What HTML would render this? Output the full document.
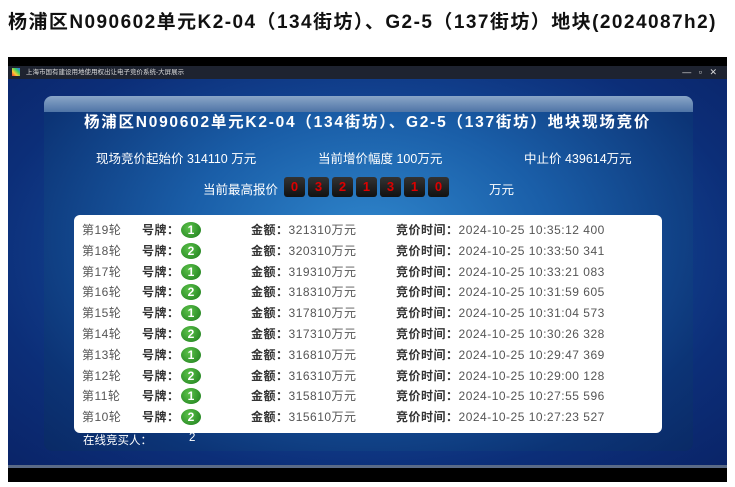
<!DOCTYPE html>
<html><head><meta charset="utf-8"><style>
*{margin:0;padding:0;box-sizing:border-box}
body{width:735px;height:487px;background:#fff;position:relative;overflow:hidden;font-family:"Liberation Sans","Noto Sans CJK SC",sans-serif}
.h{position:absolute;left:8px;top:7px;font-size:19px;font-weight:bold;color:#111;white-space:nowrap;letter-spacing:1.45px}
.blk{position:absolute;left:8px;top:57px;width:719px;height:425px;background:#000}
.tb{position:absolute;left:8px;top:66px;width:719px;height:13px;background:#1e2330;color:#ddd;font-size:6.5px;line-height:13px}
.scr{position:absolute;left:8px;top:79px;width:719px;height:386px;background:radial-gradient(ellipse at 50% 45%,#2a78c0 0%,#1650a0 35%,#0c2e78 75%,#0a2468 100%)}
.line{position:absolute;left:8px;top:465px;width:719px;height:3px;background:#5a6a86}
.pan{position:absolute;left:44px;top:96px;width:649px;height:355px;border-radius:8px;background:radial-gradient(ellipse at 50% 40%,#2f86cc 0%,#1a5ea8 40%,#0c3476 80%,#0a2a66 100%)}
.gl{position:absolute;left:44px;top:96px;width:649px;height:16px;border-radius:8px 8px 0 0;background:linear-gradient(#8aa6c8,#4f74a6)}
.t{position:absolute;color:#fff;white-space:nowrap}
.tab{position:absolute;left:74px;top:215px;width:588px;height:218px;background:#fff;border-radius:6px}
.r{position:absolute;font-size:12px;color:#555;white-space:nowrap;left:0;height:20px;line-height:20px;letter-spacing:0.5px}
.r span{position:absolute}
.r b{color:#333}
.b{display:inline-block;width:20px;height:16px;border-radius:50%;background:radial-gradient(circle at 40% 35%,#5cc24a,#1a7a1a);color:#fff;font-weight:bold;font-size:12px;text-align:center;line-height:16px;top:2px;letter-spacing:0}
.d{display:inline-block;width:21px;height:20px;margin-right:3px;background:linear-gradient(#333,#111);border-radius:3px;color:#d00;font-weight:bold;font-size:13px;text-align:center;line-height:20px}
</style></head><body>
<div class="h">杨浦区N090602单元K2-04（134街坊）、G2-5（137街坊）地块(2024087h2)</div>
<div class="blk"></div>
<div class="tb"><span style="display:inline-block;width:8px;height:8px;background:linear-gradient(45deg,#e33,#fc3,#3c6,#36f);margin:2px 6px 0 4px;vertical-align:top"></span>上海市国有建设用地使用权出让电子竞价系统-大屏展示<span style="position:absolute;right:10px;font-size:9px">—&nbsp;&nbsp;&nbsp;▫&nbsp;&nbsp;&nbsp;✕</span></div>
<div class="scr"></div>
<div class="line"></div>
<div class="pan"></div>
<div class="gl"></div>
<div class="t" style="left:84px;top:110px;font-size:15.5px;font-weight:bold;letter-spacing:1.75px">杨浦区N090602单元K2-04（134街坊）、G2-5（137街坊）地块现场竞价</div>
<div class="t" style="left:96px;top:148px;font-size:12.5px">现场竞价起始价 314110 万元</div>
<div class="t" style="left:318px;top:148px;font-size:12.5px">当前增价幅度 100万元</div>
<div class="t" style="left:524px;top:148px;font-size:12.5px">中止价 439614万元</div>
<div class="t" style="left:203px;top:179px;font-size:12.5px">当前最高报价</div>
<div class="t" style="left:284px;top:177px"><span class="d">0</span><span class="d">3</span><span class="d">2</span><span class="d">1</span><span class="d">3</span><span class="d">1</span><span class="d">0</span></div>
<div class="t" style="left:489px;top:179px;font-size:12.5px">万元</div>
<div class="tab">
<div class="r" style="top:5px"><span style="left:8px">第19轮</span><span style="left:68px"><b>号牌：</b></span><span class="b" style="left:107px">1</span><span style="left:177px"><b>金额：</b>321310万元</span><span style="left:322px"><b>竞价时间：</b>2024-10-25 10:35:12 400</span></div>
<div class="r" style="top:25.8px"><span style="left:8px">第18轮</span><span style="left:68px"><b>号牌：</b></span><span class="b" style="left:107px">2</span><span style="left:177px"><b>金额：</b>320310万元</span><span style="left:322px"><b>竞价时间：</b>2024-10-25 10:33:50 341</span></div>
<div class="r" style="top:46.6px"><span style="left:8px">第17轮</span><span style="left:68px"><b>号牌：</b></span><span class="b" style="left:107px">1</span><span style="left:177px"><b>金额：</b>319310万元</span><span style="left:322px"><b>竞价时间：</b>2024-10-25 10:33:21 083</span></div>
<div class="r" style="top:67.4px"><span style="left:8px">第16轮</span><span style="left:68px"><b>号牌：</b></span><span class="b" style="left:107px">2</span><span style="left:177px"><b>金额：</b>318310万元</span><span style="left:322px"><b>竞价时间：</b>2024-10-25 10:31:59 605</span></div>
<div class="r" style="top:88.2px"><span style="left:8px">第15轮</span><span style="left:68px"><b>号牌：</b></span><span class="b" style="left:107px">1</span><span style="left:177px"><b>金额：</b>317810万元</span><span style="left:322px"><b>竞价时间：</b>2024-10-25 10:31:04 573</span></div>
<div class="r" style="top:109px"><span style="left:8px">第14轮</span><span style="left:68px"><b>号牌：</b></span><span class="b" style="left:107px">2</span><span style="left:177px"><b>金额：</b>317310万元</span><span style="left:322px"><b>竞价时间：</b>2024-10-25 10:30:26 328</span></div>
<div class="r" style="top:129.8px"><span style="left:8px">第13轮</span><span style="left:68px"><b>号牌：</b></span><span class="b" style="left:107px">1</span><span style="left:177px"><b>金额：</b>316810万元</span><span style="left:322px"><b>竞价时间：</b>2024-10-25 10:29:47 369</span></div>
<div class="r" style="top:150.6px"><span style="left:8px">第12轮</span><span style="left:68px"><b>号牌：</b></span><span class="b" style="left:107px">2</span><span style="left:177px"><b>金额：</b>316310万元</span><span style="left:322px"><b>竞价时间：</b>2024-10-25 10:29:00 128</span></div>
<div class="r" style="top:171.4px"><span style="left:8px">第11轮</span><span style="left:68px"><b>号牌：</b></span><span class="b" style="left:107px">1</span><span style="left:177px"><b>金额：</b>315810万元</span><span style="left:322px"><b>竞价时间：</b>2024-10-25 10:27:55 596</span></div>
<div class="r" style="top:192.2px"><span style="left:8px">第10轮</span><span style="left:68px"><b>号牌：</b></span><span class="b" style="left:107px">2</span><span style="left:177px"><b>金额：</b>315610万元</span><span style="left:322px"><b>竞价时间：</b>2024-10-25 10:27:23 527</span></div>
</div>
<div class="t" style="left:83px;top:432px;font-size:11.5px">在线竞买人：</div>
<div class="t" style="left:189px;top:432px;font-size:11.5px">2</div>
</body></html>
